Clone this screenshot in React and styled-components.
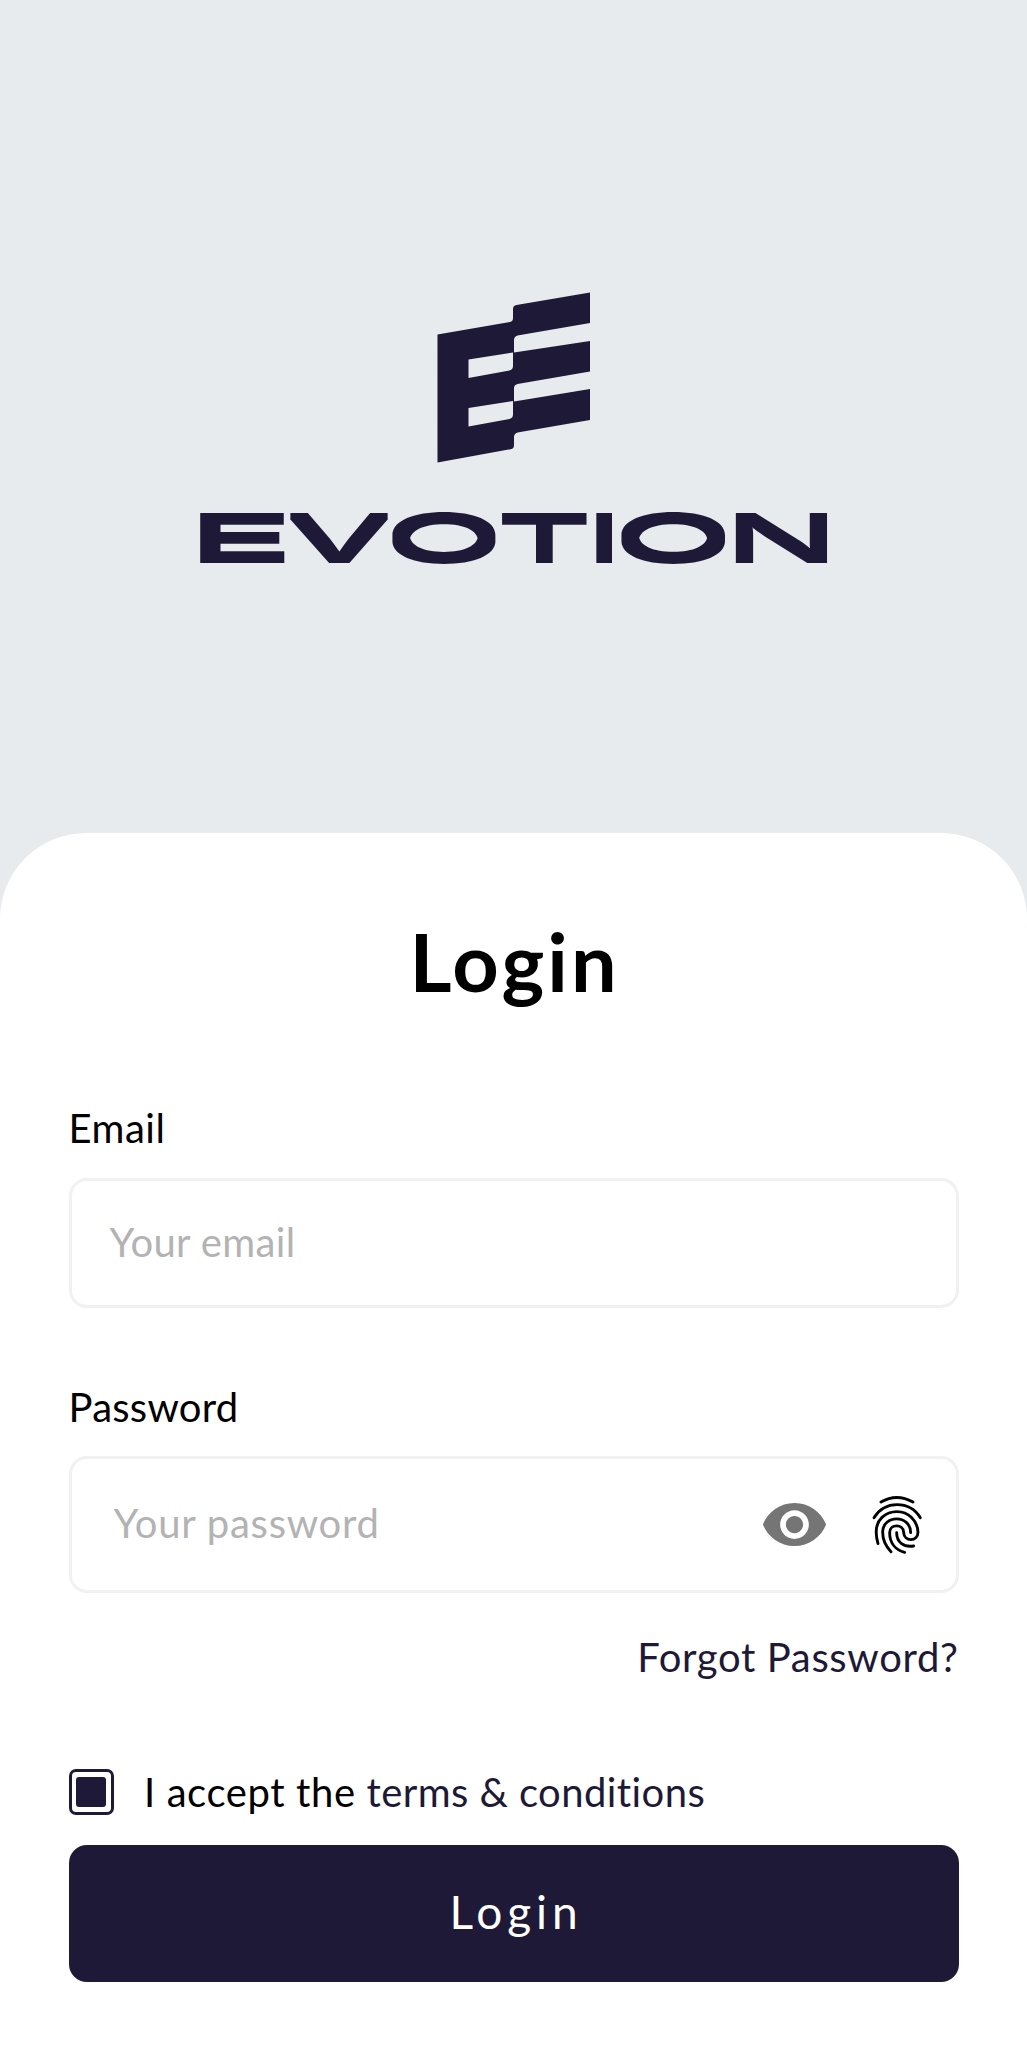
import React from "react";
import styled, { createGlobalStyle } from "styled-components";
import { MdVisibility } from "react-icons/md";

const navy = "#1e1937";

const Global = createGlobalStyle`
  * { box-sizing: border-box; }
  body { margin: 0; background: #e7ebee; font-family: Lato, "Open Sans", sans-serif; }
`;

const Screen = styled.main`
  display: flex;
  flex-direction: column;
  width: 1027px;
  height: 2048px;
  background: #e7ebee;
  overflow: hidden;
`;

const Hero = styled.header`
  display: flex;
  flex-direction: column;
  align-items: center;
  height: 833px;
  padding-top: 292px;
`;

const Emblem = styled.svg`
  display: block;
  width: 154px;
  height: 172px;
`;

const Wordmark = styled.svg`
  display: block;
  width: 660px;
  height: 110px;
  margin-top: 19px;
  font-family: Inter, sans-serif;
  font-size: 60.5px;
  font-weight: 500;
  fill: ${navy};
`;

const Sheet = styled.form`
  display: flex;
  flex-direction: column;
  flex: 1;
  padding: 0 68.5px;
  background: #fff;
  border-radius: 86px 86px 0 0;
`;

const Title = styled.h1`
  margin: 78px 0 0;
  height: 100px;
  line-height: 100px;
  font-size: 81px;
  font-weight: 700;
  text-align: center;
  text-indent: 2px;
  letter-spacing: 3px;
  color: #000;
`;

const Label = styled.label`
  display: block;
  height: 48px;
  line-height: 48px;
  margin-top: ${(p) => p.$top}px;
  font-size: 40px;
  letter-spacing: ${(p) => p.$track}px;
  color: #000;
`;

const Field = styled.div`
  display: flex;
  align-items: center;
  height: ${(p) => p.$height}px;
  margin-top: ${(p) => p.$top}px;
  padding: 0 33px 0 ${(p) => p.$left}px;
  border: 3px solid #f1f1f1;
  border-radius: 18px;
`;

const Input = styled.input`
  flex: 1;
  min-width: 0;
  height: 60px;
  padding: 0 0 3px;
  border: 0;
  outline: 0;
  background: transparent;
  font: inherit;
  font-size: 40px;
  letter-spacing: ${(p) => p.$track}px;
  &::placeholder { color: #b3b3b3; opacity: 1; }
`;

const IconButton = styled.button`
  display: flex;
  padding: 0;
  border: 0;
  background: none;
  margin-left: ${(p) => p.$gap || 0}px;
  color: ${(p) => p.$color};
`;

const Fingerprint = styled.svg`
  width: 50.3px;
  height: 59px;
  fill: none;
  stroke: currentColor;
  stroke-width: 8.6;
  stroke-linecap: round;
`;

const Forgot = styled.a`
  align-self: flex-end;
  height: 48px;
  line-height: 48px;
  margin-top: 40px;
  font-size: 40px;
  letter-spacing: 0.65px;
  color: ${navy};
`;

const Terms = styled.div`
  display: flex;
  align-items: center;
  height: 46px;
  margin-top: 88px;
  font-size: 40px;
  white-space: pre;
`;

const TermsText = styled.span`
  padding-bottom: 1px;
  letter-spacing: 0.6px;
`;

const TermsLink = styled.a`
  letter-spacing: 0.42px;
  color: ${navy};
`;

const Checkbox = styled.span`
  display: flex;
  align-items: center;
  justify-content: center;
  width: 45.5px;
  height: 45.5px;
  margin-right: 30px;
  border: 3px solid ${navy};
  border-radius: 7px;
  &::after {
    content: "";
    width: 30px;
    height: 30px;
    border-radius: 3px;
    background: ${navy};
  }
`;

const Submit = styled.button`
  height: 137px;
  margin-top: 29.5px;
  padding: 0 0 3px;
  border: 0;
  border-radius: 18px;
  background: ${navy};
  color: #fff;
  font: inherit;
  font-size: 46px;
  letter-spacing: 4.9px;
  text-indent: 5px;
`;

const letters = [
  { c: "E", x: 16.5, w: 84.5, lsb: 0.082, ink: 0.463 },
  { c: "V", x: 105.5, w: 99, lsb: 0.022, ink: 0.665 },
  { c: "O", x: 208.5, w: 104, lsb: 0.056, ink: 0.662 },
  { c: "T", x: 317.5, w: 86, lsb: 0.04, ink: 0.575 },
  { c: "I", x: 412.5, w: 15.5, lsb: 0.082, ink: 0.11 },
  { c: "O", x: 437.5, w: 104.5, lsb: 0.056, ink: 0.662 },
  { c: "N", x: 552, w: 91.5, lsb: 0.082, ink: 0.597 },
];

function Letter({ c, x, w, lsb, ink }) {
  const scale = w / (ink * 60.5);
  return (
    <text transform={`translate(${x - lsb * 60.5 * scale} 77) scale(${scale} 1)`}>{c}</text>
  );
}

export default function App() {
  return (
    <>
      <Global />
      <Screen>
        <Hero>
          <Emblem viewBox="0 0 154 172" fill={navy}>
            <path d="M.5 42.500 73 30Q76 29.500 76 26V17Q76 13.500 79.500 13L153 .5V31L80.500 43.500Q77 44.500 77 48V60.500L153 49V79.500L80.500 92Q77 93 77 96V109.500L153 97V128L80.500 140.500Q77 141.500 77 145V153Q77 156.500 74.500 157L.5 170.500ZM31.500 67.500V86L72.500 78.500Q76 77.500 76 74V60.500ZM31.500 116V134.500L72.500 127Q76 126 76 122.500V109Z" fillRule="evenodd" />
          </Emblem>
          <Wordmark viewBox="0 0 660 110" role="img" aria-label="Evotion">
            <defs>
              <filter id="heavy-bars" x="0" y="0" width="660" height="110" filterUnits="userSpaceOnUse" colorInterpolationFilters="sRGB">
                <feMorphology operator="dilate" radius="0 3" />
              </filter>
            </defs>
            <g filter="url(#heavy-bars)">
              {letters.map((l) => <Letter key={l.x} {...l} />)}
            </g>
          </Wordmark>
        </Hero>
        <Sheet>
          <Title>Login</Title>
          <Label $top={93} $track={0.5}>Email</Label>
          <Field $top={26} $height={130} $left={38}>
            <Input placeholder="Your email" $track={0.35} />
          </Field>
          <Label $top={75} $track={0.25}>Password</Label>
          <Field $top={25} $height={137} $left={42}>
            <Input placeholder="Your password" $track={0.75} />
            <IconButton type="button" $color="#757575" aria-label="Show password"><MdVisibility size={69} /></IconButton>
            <IconButton type="button" $color="#000" $gap={43.5} aria-label="Use fingerprint">
              <Fingerprint viewBox="397 135 151 177">
                <path d="M424 156Q471 129 520 156" />
                <path d="M403 203Q428 164 472 164Q518 164 542 203" />
                <path d="M415 281C404 242 410 218 427 202C452 179 492 179 515 202C528 215 535 232 535 247C535 276 493 276 492 247C491 221 450 221 450 248C450 280 469 300 495 307" />
                <path d="M454 305C436 287 429 268 429 247C429 193 513 193 513 248" />
                <path d="M471 248C471 277 493 293 522 288" />
              </Fingerprint>
            </IconButton>
          </Field>
          <Forgot>Forgot Password?</Forgot>
          <Terms>
            <Checkbox />
            <TermsText>I accept the <TermsLink>terms &amp; conditions</TermsLink></TermsText>
          </Terms>
          <Submit type="button">Login</Submit>
        </Sheet>
      </Screen>
    </>
  );
}
